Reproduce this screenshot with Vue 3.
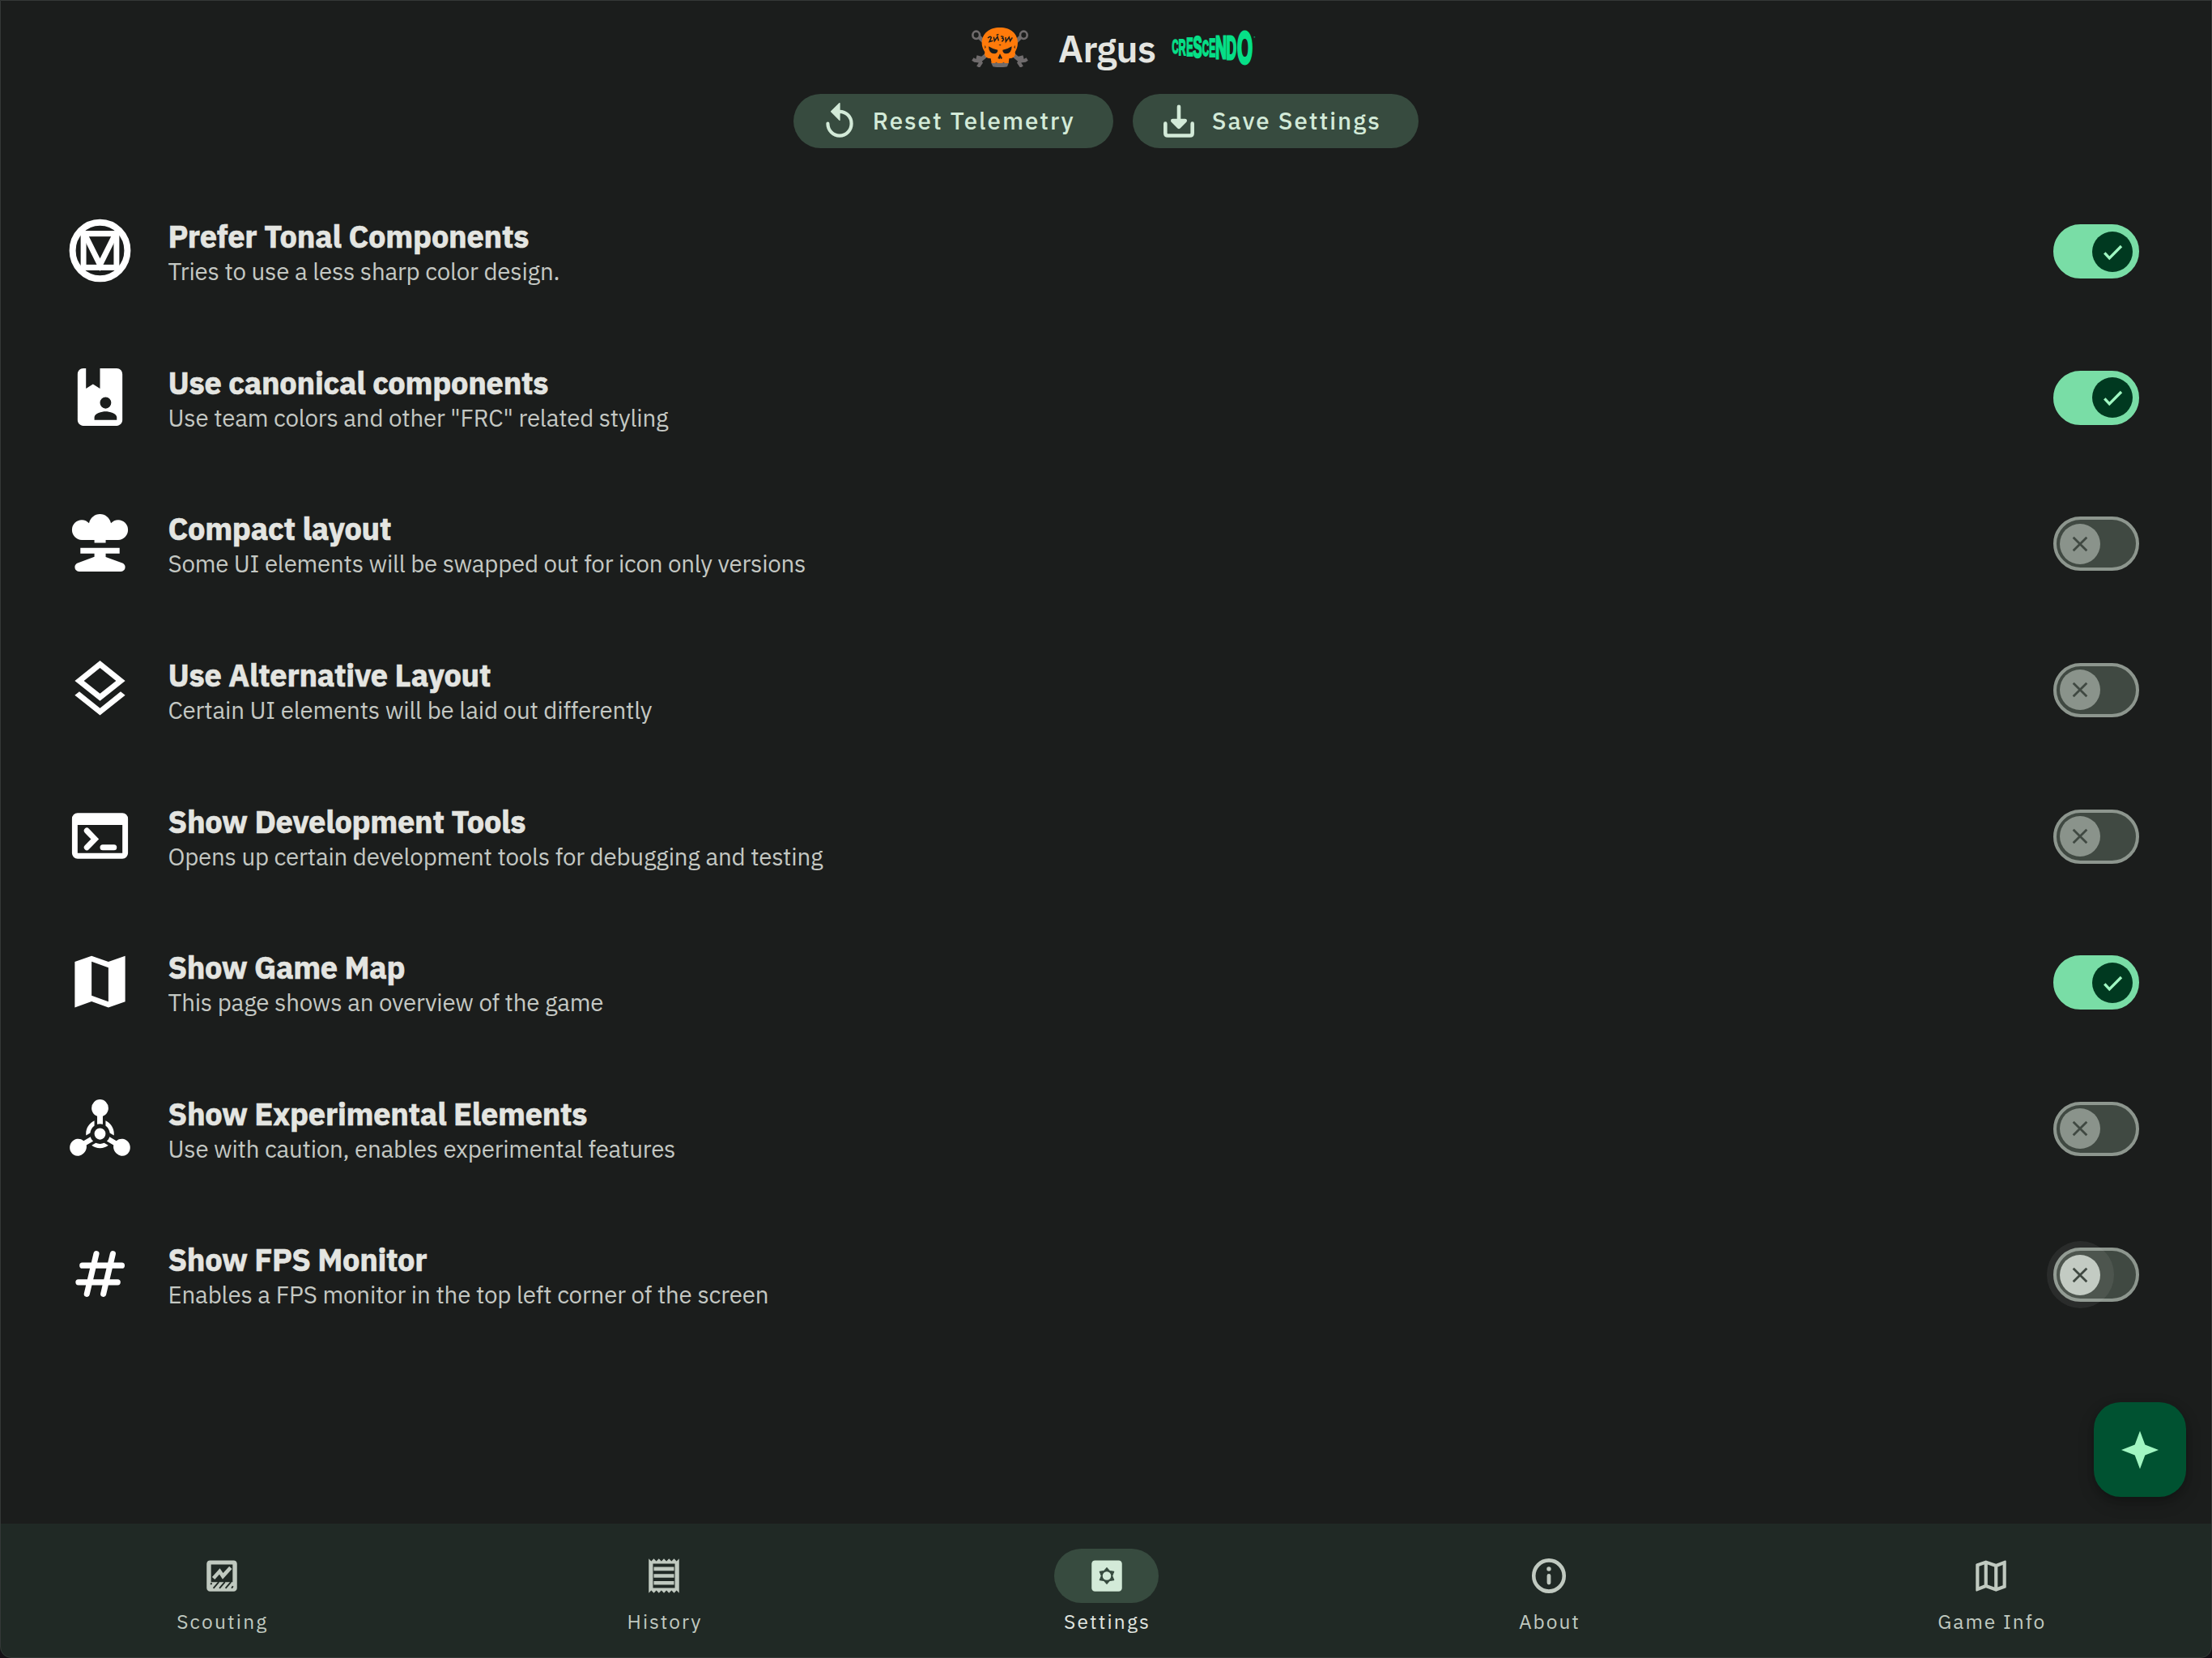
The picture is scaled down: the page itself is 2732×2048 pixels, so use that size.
<script setup>
import { ref } from 'vue'

// Spreads a label's letters so that it takes the given width.
const vFit = {
  mounted(el, { value }) {
    const width = el.getBoundingClientRect().width
    const spacing = (value - width) / (el.textContent.trim().length - 1)
    el.style.letterSpacing = `${spacing}px`
    el.style.marginRight = `${-spacing}px`
  },
}

const settings = ref([
  { icon: 'material', title: 'Prefer Tonal Components', tw: 446, text: 'Tries to use a less sharp color design.', sw: 484, on: true },
  { icon: 'book', title: 'Use canonical components', tw: 470, text: 'Use team colors and other "FRC" related styling', sw: 618, on: true },
  { icon: 'nuke', title: 'Compact layout', tw: 276, text: 'Some UI elements will be swapped out for icon only versions', sw: 788, on: false },
  { icon: 'layers', title: 'Use Alternative Layout', tw: 399, text: 'Certain UI elements will be laid out differently', sw: 598, on: false },
  { icon: 'terminal', title: 'Show Development Tools', tw: 442, text: 'Opens up certain development tools for debugging and testing', sw: 809, on: false },
  { icon: 'map', title: 'Show Game Map', tw: 293, text: 'This page shows an overview of the game', sw: 538, on: true },
  { icon: 'weapon', title: 'Show Experimental Elements', tw: 518, text: 'Use with caution, enables experimental features', sw: 627, on: false },
  { icon: 'hash', title: 'Show FPS Monitor', tw: 320, text: 'Enables a FPS monitor in the top left corner of the screen', sw: 742, on: false, hover: true },
])

const tabs = [
  { icon: 'chart', label: 'Scouting', w: 111 },
  { icon: 'receipt', label: 'History', w: 91 },
  { icon: 'settings', label: 'Settings', w: 105, active: true },
  { icon: 'info', label: 'About', w: 74 },
  { icon: 'mapOutline', label: 'Game Info', w: 132 },
]

// Each letter of the season wordmark: left edge, width, top and bottom.
const wordmark = [
  { c: 'C', x: 0, w: 21, t: 36, b: 86 },
  { c: 'R', x: 25, w: 24, t: 33, b: 91 },
  { c: 'E', x: 54, w: 21, t: 31, b: 96 },
  { c: 'S', x: 78, w: 29, t: 26, b: 101 },
  { c: 'C', x: 111, w: 22, t: 36, b: 95 },
  { c: 'E', x: 137, w: 20, t: 32, b: 98 },
  { c: 'N', x: 162, w: 34, t: 22, b: 104 },
  { c: 'D', x: 202, w: 32, t: 20, b: 106 },
  { c: 'O', x: 241, w: 51, t: 4, b: 121 },
]
for (const l of wordmark) {
  const right = { C: 68, R: 71, E: 63, S: 62, N: 65, D: 68, O: 74 }[l.c]
  const lead = { C: 4, R: 7, E: 7, S: 4, N: 7, D: 7, O: 4 }[l.c]
  const sx = l.w / (right - lead)
  l.transform = `translate(${l.x - lead * sx} ${l.b}) scale(${sx} ${(l.b - l.t) / 70})`
}
</script>

<template>
  <div class="app">
    <header class="brand">
      <svg class="skull" viewBox="60 43 210 147" preserveAspectRatio="none">
        <g fill="none" stroke="#6f6b6c">
          <g stroke-width="8">
            <ellipse cx="77" cy="71" rx="13" ry="14" />
            <ellipse cx="253" cy="71" rx="13" ry="14" />
          </g>
          <g stroke-width="15">
            <path d="M88 78L108 98M242 78L222 98M118 142L92 164M212 142L238 164" />
          </g>
          <g stroke-width="13">
            <path d="M64 160L72 165L88 167L94 174L84 189M78 152L100 158M266 160L258 165L242 167L236 174L246 189M252 152L230 158" />
          </g>
        </g>
        <path fill="#6f6b6c" d="M132 173H198L192 188Q165 193 139 188Z" />
        <path fill="#ff7a0a" d="M165 43C205 43 231 66 231 100C231 116 225 126 221 134C225 150 214 158 199 158L197 175H183L179 171L173 175H157L151 171L147 175H134L131 158C116 158 105 150 109 134C105 126 98 116 98 100C98 66 125 43 165 43Z" />
        <g fill="#1b1d1c">
          <path d="M123 113Q140 124 157 126Q157 139 144 140Q124 140 123 113Z" />
          <path d="M209 113Q192 124 175 126Q175 139 188 140Q208 140 209 113Z" />
          <path d="M165 140L157 157L164 160L166 154L168 160L174 157Z" />
          <path d="M160 106H170L166 110ZM109 108L113 116 109 122ZM221 108L217 116 221 122Z" />
        </g>
        <path fill="none" stroke="#1b1d1c" stroke-width="4.5" d="M120 82Q131 73 133 80L126 96 139 92M142 78L145 93 156 77 160 92M152 71L160 68M168 76Q182 74 174 83Q184 85 172 95M186 79L187 95 199 79 203 93 211 80" />
      </svg>
      <h1 v-fit="121" class="name">Argus</h1>
      <svg class="wordmark" viewBox="0 0 307 125" preserveAspectRatio="none">
        <g class="letters">
          <text v-for="(l, i) in wordmark" :key="i" :transform="l.transform">{{ l.c }}</text>
        </g>
        <ellipse cx="302" cy="26" rx="3" ry="2.5" fill="#06df87" opacity=".6" />
      </svg>
    </header>

    <div class="actions">
      <button class="action reset">
        <svg viewBox="0 0 24 24" preserveAspectRatio="none">
          <path d="M12 1.2L7 6l5 5z" fill="currentColor" stroke="currentColor" stroke-width=".6" stroke-linejoin="round" />
          <path d="M12 6a7 7 0 1 1-7 7" fill="none" stroke="currentColor" stroke-width="2" stroke-linecap="round" />
        </svg>
        <span v-fit="248">Reset Telemetry</span>
      </button>
      <button class="action save">
        <svg viewBox="0 0 24 24" preserveAspectRatio="none">
          <path d="M12 3.2V14M8.3 11.3L12 15l3.7-3.7zM4 13v5.6Q4 20 5.4 20h13.200Q20 20 20 18.600V13" fill="none" stroke="currentColor" stroke-width="2.200" stroke-linecap="round" stroke-linejoin="round" />
        </svg>
        <span v-fit="207">Save Settings</span>
      </button>
    </div>

    <main class="list">
      <section v-for="s in settings" :key="s.title" class="row">
        <svg class="row-icon" viewBox="0 0 24 24" preserveAspectRatio="none" fill="#fff">
          <g v-if="s.icon === 'material'" fill="none" stroke="#fff">
            <circle cx="12" cy="12" r="9.8" stroke-width="2.300" />
            <rect x="6.100" y="6.100" width="11.800" height="11.800" stroke-width="2" />
            <path d="M6.400 6L12 17L17.600 6" stroke-width="2" />
          </g>
          <path v-else-if="s.icon === 'book'" fill-rule="evenodd" d="M18 2h-6v7L9.500 7.500 7 9V2H6C4.900 2 4 2.900 4 4v16c0 1.100.900 2 2 2h12c1.100 0 2-.900 2-2V4c0-1.110-.900-2-2-2M14 12a2 2 0 1 1-2 2 2 2 0 0 1 2-2M18 20h-8v-1c0-1.330 2.670-2 4-2s4 .670 4 2z" />
          <path v-else-if="s.icon === 'nuke'" d="M14.040 12H10V11H5.500A3.500 3.500 0 0 1 2 7.500A3.500 3.500 0 0 1 5.500 4C6.530 4 7.450 4.440 8.090 5.150C8.500 3.350 10.080 2 12 2C13.920 2 15.500 3.350 15.910 5.150C16.550 4.440 17.470 4 18.500 4A3.500 3.500 0 0 1 22 7.500A3.500 3.500 0 0 1 18.500 11H14.040V12M10 16.900V15.760H5V13.760H19V15.760H14.040V16.920L20 19.080C20.580 19.290 21 19.840 21 20.500A1.500 1.500 0 0 1 19.500 22H4.500A1.500 1.500 0 0 1 3 20.500C3 19.840 3.420 19.290 4 19.080Z" />
          <path v-else-if="s.icon === 'layers'" d="M12 18.540L19.370 12.800L21 14.070L12 21.070L3 14.070L4.620 12.810L12 18.540M12 16L3 9L12 2L21 9L12 16M12 4.530L6.260 9L12 13.470L17.740 9L12 4.530Z" />
          <g v-else-if="s.icon === 'terminal'">
            <path fill-rule="evenodd" d="M4 4h16a2 2 0 0 1 2 2v12a2 2 0 0 1-2 2H4a2 2 0 0 1-2-2V6a2 2 0 0 1 2-2zM4 8.200V18h16V8.200z" />
            <path d="M7.300 10.200L10.200 13.100 7.300 16M13 16h4" fill="none" stroke="#fff" stroke-width="2" stroke-linecap="round" />
          </g>
          <path v-else-if="s.icon === 'map'" fill-rule="evenodd" d="M3 5.100L9 3l6 2.100L21 3v16l-6 2-6-2.100L3 21zM15 19V7.100L9 5v11.900z" />
          <path v-else-if="s.icon === 'weapon'" d="M11 7.830C9.830 7.420 9 6.300 9 5A3 3 0 0 1 12 2A3 3 0 0 1 15 5C15 6.310 14.160 7.420 13 7.830V10.640C12.680 10.550 12.350 10.500 12 10.500C11.650 10.500 11.320 10.550 11 10.640V7.830M18.300 21.100C17.160 20.450 16.620 19.180 16.840 17.960L14.400 16.550C14.880 16.160 15.240 15.640 15.400 15L17.840 16.430C18.790 15.640 20.160 15.500 21.300 16.150C22.730 17 23.220 18.840 22.390 20.270C21.560 21.710 19.730 22.200 18.300 21.100M2.700 16.150C3.840 15.500 5.210 15.640 6.160 16.430L8.600 15.030C8.760 15.640 9.120 16.160 9.600 16.550L7.160 17.960C7.380 19.180 6.840 20.450 5.700 21.100C4.270 22.200 2.440 21.710 1.610 20.270C.780 18.840 1.270 17 2.700 16.150M14 14A2 2 0 0 1 12 16A2 2 0 0 1 10 14A2 2 0 0 1 12 12A2 2 0 0 1 14 14M17 14L16.970 14.570L15.500 13.710C15.400 12.640 14.830 11.710 14 11.120V9.410C15.770 10.190 17 11.950 17 14M14.970 18.030C14.140 18.640 13.110 19 12 19C10.890 19 9.860 18.640 9.030 18.030L10.500 17.170C10.960 17.380 11.470 17.500 12 17.500C12.530 17.500 13.030 17.380 13.500 17.170L14.970 18.030M7.030 14.560L7 14C7 11.950 8.230 10.190 10 9.420V11.130C9.170 11.710 8.600 12.640 8.500 13.700L7.030 14.560Z" />
          <path v-else d="M10.700 5L7.300 19M16.600 5L13.200 19M5.700 9.100H19.800M4.300 14.900H18.300" fill="none" stroke="#fff" stroke-width="2.050" stroke-linecap="round" />
        </svg>
        <div class="copy">
          <div class="title"><span v-fit="s.tw">{{ s.title }}</span></div>
          <div class="text"><span v-fit="s.sw">{{ s.text }}</span></div>
        </div>
        <div class="switch" :class="{ on: s.on, hover: s.hover }" role="switch" :aria-checked="s.on" @click="s.on = !s.on">
          <div class="thumb">
            <svg viewBox="-24.500 -25 49 50">
              <path v-if="s.on" d="M-9.700 1.300L-3.700 7.900L11 -7" />
              <path v-else d="M-8.300 -8.300L8.300 8.300M8.300 -8.300L-8.300 8.300" />
            </svg>
          </div>
        </div>
      </section>
    </main>

    <button class="fab" aria-label="Assistant">
      <svg viewBox="-24 -24 48 48">
        <path d="M0 -23.500L6.300 -6.500L23 0L6.300 6.500L0 23.500L-6.300 6.500L-23 0L-6.300 -6.500Z" />
      </svg>
    </button>

    <nav class="tabs">
      <a v-for="t in tabs" :key="t.label" class="tab" :class="{ active: t.active }">
        <span class="pill">
          <svg viewBox="0 0 24 24" preserveAspectRatio="none" fill="currentColor">
            <g v-if="t.icon === 'chart'">
              <path fill-rule="evenodd" d="M5 3h14a2 2 0 0 1 2 2v14a2 2 0 0 1-2 2H5a2 2 0 0 1-2-2V5a2 2 0 0 1 2-2zM5.600 5.400V15.600H18.400V5.400z" />
              <path d="M7 13.400L10.700 9.400L12.600 12.200L17.200 7.200" fill="none" stroke="currentColor" stroke-width="2.200" />
              <path d="M6 16.200l-.6.800M10.200 15.600L7 19.200M13.800 15.600L10.600 19.200M17.400 15.600L14.200 19.200M18.600 18l-.8 1.200" fill="none" stroke="#202925" stroke-width=".9" />
            </g>
            <path v-else-if="t.icon === 'receipt'" fill-rule="evenodd" d="M19.500 3.500 18 2l-1.500 1.500L15 2l-1.500 1.500L12 2l-1.500 1.500L9 2 7.500 3.500 6 2 4.500 3.500 3 2v20l1.500-1.500L6 22l1.500-1.500L9 22l1.500-1.500L12 22l1.500-1.500L15 22l1.500-1.500L18 22l1.500-1.500L21 22V2zM18.500 19.090H5.500V4.910h13zM6 15h12v2.200H6zm0-4.100h12v2.200H6zm0-4.100h12v2.200H6z" />
            <g v-else-if="t.icon === 'settings'">
              <rect x="3" y="3" width="18" height="18" rx="2" />
              <path d="M12 7.300L13.700 9.200L16.200 9.500L15.200 12L16.200 14.500L13.700 14.800L12 16.700L10.300 14.800L7.800 14.500L8.800 12L7.800 9.500L10.300 9.200Z" fill="#374b3f" stroke="#374b3f" stroke-width=".5" stroke-linejoin="round" />
              <circle cx="12" cy="12" r="2.500" />
            </g>
            <g v-else-if="t.icon === 'info'">
              <circle cx="12" cy="12" r="9" fill="none" stroke="currentColor" stroke-width="2.200" />
              <circle cx="12" cy="8" r="1.300" />
              <path d="M12 12v4" stroke="currentColor" stroke-width="2.300" stroke-linecap="round" />
            </g>
            <path v-else fill-rule="evenodd" d="M20.500 3L20.340 3.030L15 5.100L9 3L3.360 4.900C3.150 4.970 3 5.150 3 5.380V20.500A.5.5 0 0 0 3.500 21L3.660 20.970L9 18.900L15 21L20.640 19.100C20.850 19.030 21 18.850 21 18.620V3.500A.5.5 0 0 0 20.500 3M10 5.470L14 6.870V18.530L10 17.130V5.470M5 6.460L8 5.450V17.150L5 18.310V6.460M19 17.540L16 18.550V6.860L19 5.700V17.540Z" />
          </svg>
        </span>
        <span v-fit="t.w" class="label">{{ t.label }}</span>
      </a>
    </nav>
  </div>
</template>

<style>
html,
body {
  background: #151116;
}
</style>

<style scoped>
.app {
  position: relative;
  display: flex;
  flex-direction: column;
  width: 2732px;
  height: 2048px;
  overflow: hidden;
  background: #1b1d1c;
  border-radius: 0 0 14px 14px;
  font-family: 'IBM Plex Sans', 'Open Sans', 'Noto Sans', sans-serif;
  color: #e4e5e1;
}

/* Window edge */
.app::after {
  content: '';
  position: absolute;
  inset: 0;
  border: 1px solid #343837;
  border-radius: 0 0 14px 14px;
  pointer-events: none;
}

.app span {
  display: inline-block;
  white-space: nowrap;
}

.brand {
  display: flex;
  align-items: center;
  justify-content: center;
  height: 116px;
  padding-left: 19px;
  box-sizing: border-box;
}

.skull {
  width: 70px;
  height: 49px;
  margin-top: 1px;
}

.name {
  margin: 3px 0 0 37px;
  font-size: 46px;
  line-height: 64px;
  font-weight: 600;
  white-space: nowrap;
}

.wordmark {
  width: 103px;
  height: 42px;
  margin-left: 20px;
  overflow: visible;
}

.letters {
  font-family: 'Liberation Sans', sans-serif;
  font-weight: 700;
  font-size: 100px;
  fill: #06df87;
  stroke: #06df87;
  stroke-width: 7px;
}

.actions {
  display: flex;
  justify-content: center;
  gap: 23.500px;
}

.action {
  display: flex;
  align-items: center;
  height: 67px;
  padding: 0;
  border: 0;
  border-radius: 34px;
  background: #374b3f;
  color: #d3ead8;
  font: 500 29.500px/67px 'IBM Plex Sans', 'Open Sans', 'Noto Sans', sans-serif;
}

.action svg {
  width: 50px;
  height: 51px;
  margin: 1px 16px 0 32px;
}

.reset {
  width: 395.500px;
}

.save {
  width: 353.500px;
}

.list {
  margin-top: 37.500px;
}

.row {
  display: flex;
  align-items: center;
  height: 180.570px;
  padding: 0 90px 0 81.500px;
}

.row-icon {
  width: 83px;
  height: 85px;
  margin-top: -2px;
}

.copy {
  flex: 1;
  margin-left: 43px;
  padding-top: 3px;
}

.title {
  font-size: 38px;
  line-height: 46px;
  font-weight: 700;
  -webkit-text-stroke: 0.6px #e4e5e1;
}

.text {
  font-size: 29.500px;
  line-height: 40px;
  color: #c4c8c3;
}

.switch {
  position: relative;
  display: flex;
  align-items: center;
  width: 106px;
  height: 67px;
  padding: 0 4px;
  box-sizing: border-box;
  border: 4.500px solid #8d968e;
  border-radius: 34px;
  background: #404942;
}

.thumb {
  position: relative;
  width: 50px;
  height: 50px;
  border-radius: 50%;
  background: #8a938b;
}

.thumb svg {
  position: relative;
  display: block;
  width: 50px;
  height: 50px;
}

.thumb path {
  fill: none;
  stroke: #404942;
  stroke-width: 2.800;
}

.switch.on {
  justify-content: flex-end;
  background: #79dda6;
  border-color: #79dda6;
}

.on .thumb {
  background: #003920;
}

.on .thumb path {
  stroke: #9ff7c2;
  stroke-width: 3.400;
}

.hover .thumb {
  background: #c0c9c0;
}

.hover .thumb::before {
  content: '';
  position: absolute;
  inset: -16.500px;
  border-radius: 50%;
  background: rgba(228, 229, 225, 0.08);
}

.fab {
  position: absolute;
  left: 2586px;
  top: 1732px;
  display: flex;
  align-items: center;
  justify-content: center;
  width: 114px;
  height: 117px;
  padding: 0;
  border: 0;
  border-radius: 33px;
  background: #005231;
  box-shadow: 0 8px 20px rgba(0, 0, 0, 0.2), 0 3px 8px rgba(0, 0, 0, 0.14);
}

.fab svg {
  width: 48px;
  height: 48px;
  fill: #a1f6c2;
}

.tabs {
  display: flex;
  height: 166px;
  margin-top: auto;
  background: #202925;
}

.tab {
  flex: 1;
  display: flex;
  flex-direction: column;
  align-items: center;
  padding: 31px 0 0 1px;
  color: #c0c9c0;
}

.app .pill {
  display: flex;
  align-items: center;
  justify-content: center;
  width: 129px;
  height: 67px;
  border-radius: 34px;
}

.pill svg {
  width: 50px;
  height: 51px;
}

.label {
  margin-top: 7px;
  font-size: 24.500px;
  line-height: 32px;
  font-weight: 400;
}

.active {
  color: #e1e6e0;
}

.active .pill {
  background: #374b3f;
  color: #d3ead8;
}
</style>
